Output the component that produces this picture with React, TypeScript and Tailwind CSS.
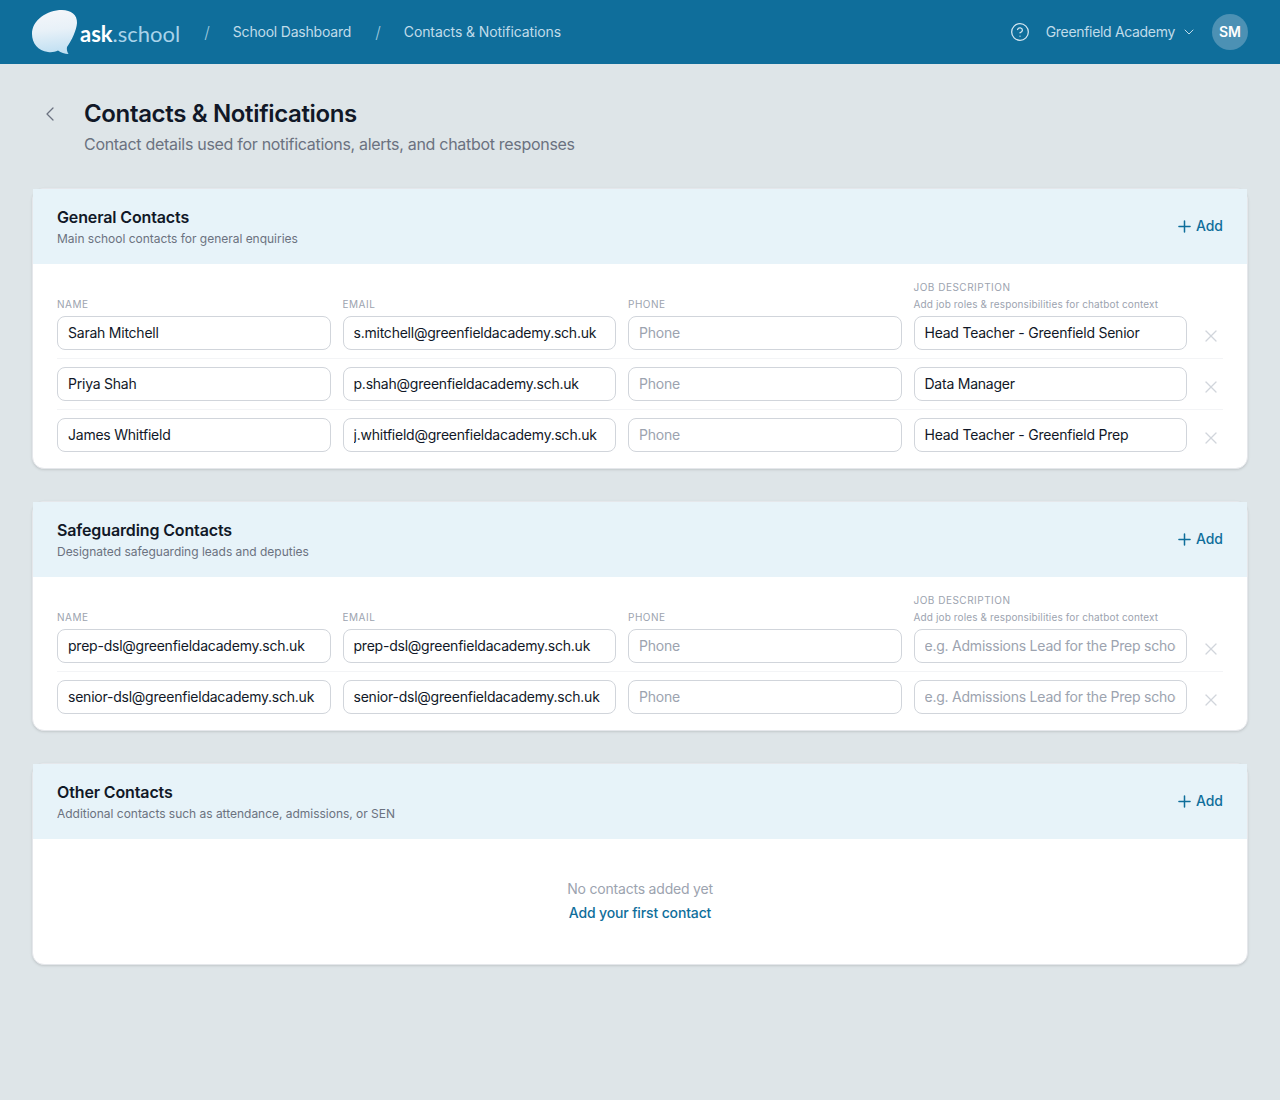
import { ChevronDown, ChevronLeft, CircleHelp, Plus, X } from "lucide-react";

type Row = { name: string; email: string; job: string };

const general: Row[] = [
  { name: "Sarah Mitchell", email: "s.mitchell@greenfieldacademy.sch.uk", job: "Head Teacher - Greenfield Senior" },
  { name: "Priya Shah", email: "p.shah@greenfieldacademy.sch.uk", job: "Data Manager" },
  { name: "James Whitfield", email: "j.whitfield@greenfieldacademy.sch.uk", job: "Head Teacher - Greenfield Prep" },
];
const safeguarding: Row[] = [
  { name: "prep-dsl@greenfieldacademy.sch.uk", email: "prep-dsl@greenfieldacademy.sch.uk", job: "" },
  { name: "senior-dsl@greenfieldacademy.sch.uk", email: "senior-dsl@greenfieldacademy.sch.uk", job: "" },
];

function Field({ value, placeholder }: { value?: string; placeholder: string }) {
  return (
    <input
      readOnly
      value={value ?? ""}
      placeholder={placeholder}
      className="w-full min-w-0 rounded-lg border border-[#d1d5db] bg-white px-2.5 py-1.5 text-sm leading-5 tracking-[-0.23px] text-[#111827] outline-none placeholder:text-[#9ca3af]"
    />
  );
}

function Label({ children }: { children: string }) {
  return <div className="text-[10px] leading-[15px] font-normal uppercase tracking-[0.5px] text-[#9ca3af]">{children}</div>;
}

function Head({ title, sub }: { title: string; sub: string }) {
  return (
    <div className="flex items-center justify-between border-b border-[#e7f3f9] bg-[#e7f3f9] px-6 py-4">
      <div>
        <h2 className="text-base leading-6 font-semibold tracking-[-0.13px] text-[#111827]">{title}</h2>
        <p className="mt-0.5 text-xs leading-4 tracking-[-0.02px] text-[#6b7280]">{sub}</p>
      </div>
      <button className="flex items-center gap-[2px] text-sm leading-5 font-medium text-[#0f6e9b]">
        <Plus size={19} strokeWidth={1.9} />
        Add
      </button>
    </div>
  );
}

function Rows({ rows }: { rows: Row[] }) {
  return (
    <div className="px-6 pt-4 pb-4">
      <div className="mb-1 grid grid-cols-[1fr_1fr_1fr_1fr_24px] items-end gap-3">
        <Label>Name</Label>
        <Label>Email</Label>
        <Label>Phone</Label>
        <div>
          <Label>Job Description</Label>
          <div className="mt-0.5 text-[10px] leading-[15px] tracking-[0.13px] text-[#9ca3af]">Add job roles &amp; responsibilities for chatbot context</div>
        </div>
        <div />
      </div>
      {rows.map((r, i) => (
        <div
          key={r.name}
          className={`grid grid-cols-[1fr_1fr_1fr_1fr_24px] gap-3 ${i < rows.length - 1 ? "border-b border-[#f3f4f6] pb-2 mb-2" : ""}`}
        >
          <Field value={r.name} placeholder="Name" />
          <Field value={r.email} placeholder="Email" />
          <Field placeholder="Phone" />
          <Field value={r.job} placeholder="e.g. Admissions Lead for the Prep school" />
          <button className="flex items-center justify-center pt-1.5 text-[#d1d5db]">
            <X size={20} strokeWidth={1.5} />
          </button>
        </div>
      ))}
    </div>
  );
}

function Logo() {
  return (
    <div className="flex items-center">
      <svg width="48" height="46" viewBox="0 0 48 46" className="shrink-0">
        <defs>
          <linearGradient id="bubble" x1="0.4" y1="0" x2="0.5" y2="1">
            <stop offset="0" stopColor="#f4f6fa" />
            <stop offset="0.45" stopColor="#e8f1f8" />
            <stop offset="1" stopColor="#bfdff2" />
          </linearGradient>
        </defs>
        <path
          d="M30 1C39 1 45.5 6 45 14C44.5 21 40 31 35 38C34.6 40 35 43 36.5 45C32.5 45 29 43.5 26 41.5C23 43 19.5 43.5 16 43C6 42 0 34 0 25C0 11 15 1 30 1Z"
          fill="url(#bubble)"
        />
      </svg>
      <span className="mt-1 font-['Lato',sans-serif] text-[22px] leading-7 text-[#a9d3ea]">
        <span className="font-bold text-white">ask</span>.school
      </span>
    </div>
  );
}

export default function App() {
  return (
    <div className="min-h-[1100px] bg-[#dee5e8] font-['Inter',sans-serif]">
      <header className="flex h-16 items-center justify-between bg-[#0f6e9b] px-8 text-sm text-[#c0dcea]">
        <div className="flex items-center">
          <Logo />
          <span className="ml-6 text-base font-light text-[#9fc9de]">/</span>
          <span className="ml-[23px] tracking-[-0.2px]">School Dashboard</span>
          <span className="ml-6 text-base font-light text-[#9fc9de]">/</span>
          <span className="ml-[23px] tracking-[-0.1px]">Contacts &amp; Notifications</span>
        </div>
        <div className="flex items-center">
          <CircleHelp size={20} strokeWidth={1.5} className="text-[#d4e7f1]" />
          <span className="ml-4 tracking-[-0.32px]">Greenfield Academy</span>
          <ChevronDown size={16} strokeWidth={1.5} className="ml-1.5" />
          <div className="ml-[15px] flex h-9 w-9 items-center justify-center rounded-full bg-[#4c91b4] text-sm font-semibold text-white">SM</div>
        </div>
      </header>
      <main className="px-8 pt-8">
        <div className="mb-8 flex items-start">
          <button className="mt-1.5 ml-1.5 text-[#6b7280]">
            <ChevronLeft size={24} strokeWidth={1.25} />
          </button>
          <div className="ml-[22px]">
            <h1 className="mt-0.5 text-2xl leading-8 font-semibold tracking-[-0.35px] text-[#111827]">Contacts &amp; Notifications</h1>
            <p className="mt-0.5 text-base leading-6 tracking-[-0.3px] text-[#6b7280]">Contact details used for notifications, alerts, and chatbot responses</p>
          </div>
        </div>
        <section className="mb-8 rounded-xl border border-[#e5e7eb] bg-white shadow">
          <Head title="General Contacts" sub="Main school contacts for general enquiries" />
          <Rows rows={general} />
        </section>
        <section className="mb-8 rounded-xl border border-[#e5e7eb] bg-white shadow">
          <Head title="Safeguarding Contacts" sub="Designated safeguarding leads and deputies" />
          <Rows rows={safeguarding} />
        </section>
        <section className="rounded-xl border border-[#e5e7eb] bg-white shadow">
          <Head title="Other Contacts" sub="Additional contacts such as attendance, admissions, or SEN" />
          <div className="pt-10 pb-[41px] text-center text-sm leading-5">
            <p className="tracking-[-0.2px] text-[#9ca3af]">No contacts added yet</p>
            <button className="mt-1 font-medium tracking-[-0.14px] text-[#0f6e9b]">Add your first contact</button>
          </div>
        </section>
      </main>
    </div>
  );
}
